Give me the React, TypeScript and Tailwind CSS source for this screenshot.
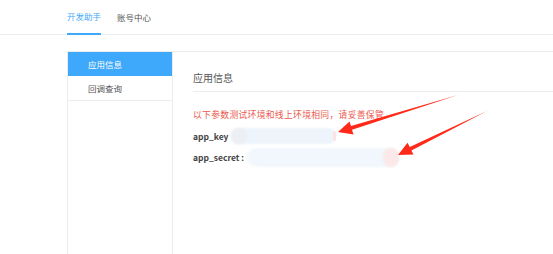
export default function App() {
  return (
    <div className="relative w-[553px] h-[254px] bg-white overflow-hidden font-['Noto_Sans_CJK_SC','Microsoft_YaHei',sans-serif]">
      <div className="flex h-[35px] border-b border-[#ececec] pl-[67px] gap-4">
        <div className="flex items-center border-b-2 border-[#3ea8fa] -mb-px text-[8.5px] text-[#3ea8fa]">开发助手</div>
        <div className="flex items-center text-[8.5px] text-[#555]">账号中心</div>
      </div>

      <div className="ml-[67px] mt-4 flex h-[220px] border-t border-l border-[#ececec]">
        <div className="w-[105px] shrink-0 border-r border-[#ececec]">
          <div className="h-6 flex items-center pl-5 bg-[#3ea8fa] text-white text-[8.5px]">应用信息</div>
          <div className="h-[25px] flex items-center pl-5 border-b border-[#ececec] text-[8.5px] text-[#555]">回调查询</div>
        </div>

        <div className="flex-1 pl-5">
          <div className="pt-[19px] pb-[6px] border-b border-[#ececec] text-[10px] leading-[14px] text-[#555]">应用信息</div>
          <div className="mt-[17px] text-[8.8px] leading-[12px] tracking-[0.3px] text-[#ec5a50]">以下参数测试环境和线上环境相同，请妥善保管</div>

          <div className="mt-[7px] flex items-center h-4">
            <span className="text-[8.5px] font-bold text-[#444]">app_key</span>
            <div className="ml-[3px] relative w-[105px] h-4">
              <div className="absolute inset-0 rounded-full bg-[#edf4fc] blur-[1px]" />
              <div className="absolute left-0 top-0 w-4 h-4 rounded-full bg-[#eceff3] blur-[1px]" />
              <div className="absolute right-0 top-[3px] w-[3px] h-[10px] rounded-full bg-[#fbe4e4]" />
            </div>
          </div>

          <div className="mt-1 flex items-center h-[19px]">
            <span className="text-[8.5px] font-bold text-[#444]">app_secret :</span>
            <div className="ml-[3px] relative w-[152px] h-[19px]">
              <div className="absolute inset-0 rounded-full bg-[#f2f7fd] blur-[1px]" />
              <div className="absolute right-0 top-0 w-[16px] h-[19px] rounded-full bg-[#fbe8e8] blur-[1px]" />
            </div>
          </div>
        </div>
      </div>

      <svg className="absolute inset-0 pointer-events-none" width="553" height="254" viewBox="0 0 553 254">
        <polygon
          fill="#ff2a1a"
          points="458,95 351,126 349.5,121.5 338,132 353.5,134.5 352,129.8"
        />
        <polygon
          fill="#ff2a1a"
          points="487,111 409.8,147 407.5,142.8 398,155 413.5,154.5 411.4,150.6"
        />
      </svg>
    </div>
  );
}
